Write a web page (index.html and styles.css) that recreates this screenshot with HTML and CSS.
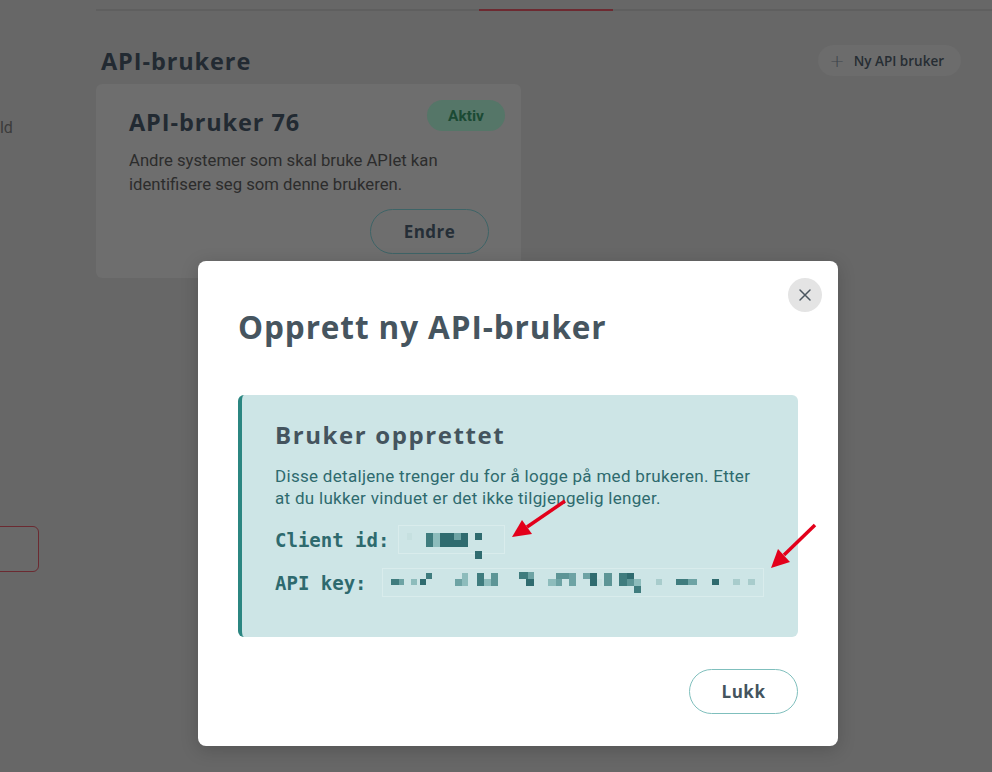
FILE: index.html
```html
<!DOCTYPE html>
<html lang="no">
<head>
<meta charset="utf-8">
<title>API-brukere</title>
<link rel="stylesheet" href="styles.css">
</head>
<body>
<div class="layout">
  <aside class="sidebar">
    <div class="side-link">Innhold</div>
    <div class="side-box"></div>
  </aside>
  <main class="main">
    <div class="tabs">
      <div class="tab"></div>
      <div class="tab tab-active"></div>
    </div>
    <div class="header">
      <h1 class="page-title">API-brukere</h1>
      <button class="new-btn"><span class="plus">+</span>Ny API bruker</button>
    </div>
    <div class="card">
      <div class="card-top">
        <h2 class="card-title">API-bruker 76</h2>
        <span class="badge">Aktiv</span>
      </div>
      <p class="card-text">Andre systemer som skal bruke APIet kan identifisere seg som denne brukeren.</p>
      <div class="card-actions">
        <button class="btn-outline dark">Endre</button>
      </div>
    </div>
  </main>
</div>

<div class="modal">
  <button class="modal-close" aria-label="Lukk">
    <svg width="14" height="14" viewBox="0 0 14 14"><path d="M2 2 L12 12 M12 2 L2 12" stroke="#4a5660" stroke-width="1.5" fill="none" stroke-linecap="round"/></svg>
  </button>
  <h2 class="modal-title">Opprett ny API-bruker</h2>
  <div class="info">
    <h3 class="info-title">Bruker opprettet</h3>
    <p class="info-text">Disse detaljene trenger du for å logge på med brukeren. Etter at du lukker vinduet er det ikke tilgjengelig lenger.</p>
    <div class="cred"><span class="cred-label">Client id:</span><span class="secret secret-id"><svg width="107" height="28" viewBox="0 0 107 28">
        <rect x="8" y="7" width="5" height="7" fill="#c6e0e0"/>
        <rect x="27" y="7" width="7" height="14" fill="#3f7c7e"/>
        <rect x="34" y="7" width="7" height="14" fill="#8dbcbc"/>
        <rect x="41" y="7" width="14" height="14" fill="#2f6b6f"/>
        <rect x="55" y="7" width="7" height="7" fill="#6da3a4"/>
        <rect x="55" y="14" width="7" height="7" fill="#2f6b6f"/>
        <rect x="62" y="7" width="7" height="14" fill="#2f6b6f"/>
        <rect x="76" y="7" width="7" height="7" fill="#2f6b6f"/>
        <rect x="76" y="25" width="7" height="8" fill="#2f6b6f"/>
      </svg></span></div>
    <div class="cred"><span class="cred-label">API key:</span><span class="secret secret-key"><svg width="382" height="28" viewBox="0 0 382 28">
        <g transform="translate(0,1)">
        <rect x="8" y="9" width="8" height="6" fill="#3f7c7e"/>
        <rect x="16" y="9" width="5" height="6" fill="#6da3a4"/>
        <rect x="28" y="9" width="6" height="6" fill="#8dbcbc"/>
        <rect x="37" y="9" width="6" height="6" fill="#2f6b6f"/>
        <rect x="43" y="3" width="6" height="6" fill="#3f7c7e"/>
        <rect x="72" y="9" width="7" height="7" fill="#6da3a4"/>
        <rect x="79" y="3" width="6" height="13" fill="#8dbcbc"/>
        <rect x="94" y="3" width="7" height="13" fill="#3f7c7e"/>
        <rect x="101" y="9" width="7" height="7" fill="#8dbcbc"/>
        <rect x="108" y="3" width="7" height="13" fill="#5d9596"/>
        <rect x="136" y="2" width="9" height="7" fill="#3f7c7e"/>
        <rect x="145" y="2" width="6" height="7" fill="#6da3a4"/>
        <rect x="143" y="9" width="8" height="7" fill="#2f6b6f"/>
        <rect x="165" y="9" width="8" height="7" fill="#8dbcbc"/>
        <rect x="173" y="3" width="13" height="6" fill="#5d9596"/>
        <rect x="173" y="9" width="6" height="7" fill="#6da3a4"/>
        <rect x="186" y="3" width="7" height="13" fill="#6da3a4"/>
        <rect x="200" y="3" width="7" height="6" fill="#6da3a4"/>
        <rect x="207" y="3" width="7" height="13" fill="#2f6b6f"/>
        <rect x="214" y="9" width="5" height="7" fill="#c6e0e0"/>
        <rect x="221" y="3" width="8" height="13" fill="#5d9596"/>
        <rect x="236" y="3" width="8" height="13" fill="#3f7c7e"/>
        <rect x="244" y="3" width="7" height="6" fill="#2f6b6f"/>
        <rect x="244" y="9" width="7" height="7" fill="#5d9596"/>
        <rect x="251" y="9" width="7" height="7" fill="#8dbcbc"/>
        <rect x="251" y="16" width="7" height="7" fill="#3f7c7e"/>
        <rect x="273" y="9" width="6" height="6" fill="#a8cccc"/>
        <rect x="293" y="9" width="12" height="6" fill="#3f7c7e"/>
        <rect x="305" y="9" width="9" height="6" fill="#6da3a4"/>
        <rect x="329" y="9" width="7" height="6" fill="#2f6b6f"/>
        <rect x="350" y="9" width="7" height="6" fill="#a8cccc"/>
        <rect x="365" y="9" width="7" height="6" fill="#a8cccc"/>
        </g>
      </svg></span></div>
  </div>
  <div class="modal-actions">
    <button class="btn-outline teal">Lukk</button>
  </div>
</div>

<svg class="annotations" width="992" height="772" viewBox="0 0 992 772">
  <line x1="565" y1="501" x2="527" y2="527" stroke="#e3001b" stroke-width="3.5"/>
  <polygon points="512,537 532,534 522,520" fill="#e3001b"/>
  <line x1="815" y1="525" x2="784" y2="555" stroke="#e3001b" stroke-width="3.5"/>
  <polygon points="771,568 790,562 778,549" fill="#e3001b"/>
</svg>
</body>
</html>
```

FILE: styles.css
```css
* { box-sizing: border-box; }
html, body { margin: 0; padding: 0; }
body {
  width: 992px;
  height: 772px;
  overflow: hidden;
  background: #676767;
  font-family: Roboto, "Liberation Sans", sans-serif;
  position: relative;
}
button { font: inherit; cursor: pointer; }
h1, h2, h3, p { margin: 0; }

.layout { display: flex; height: 772px; }

.sidebar { width: 96px; flex: none; overflow: hidden; }
.side-link {
  margin: 116px 0 0 -40px;
  font-size: 16px;
  line-height: 24px;
  color: #3b3b3b;
  white-space: nowrap;
}
.side-box {
  margin: 386px 0 0 -40px;
  width: 79px;
  height: 46px;
  border: 1px solid #6b2a31;
  border-radius: 6px;
  background: #696969;
}

.main { flex: 1; min-width: 0; }

.tabs {
  height: 11px;
  display: flex;
  border-bottom: 2px solid #5f5f5f;
  padding-left: 383px;
}
.tab { width: 0; }
.tab-active {
  width: 134px;
  height: 11px;
  border-bottom: 2px solid #6d2a31;
  margin-bottom: -2px;
}

.header {
  margin-top: 34px;
  height: 31px;
  display: flex;
  justify-content: space-between;
  align-items: center;
  padding: 0 31px 0 5px;
  width: 896px;
}
.page-title {
  font-family: "Open Sans", sans-serif;
  font-weight: 700;
  font-size: 23.5px;
  color: #222a32;
  letter-spacing: 0.9px;
}
.new-btn {
  height: 31px;
  padding: 0 17px 0 12px;
  border: none;
  border-radius: 16px;
  background: #6c6c6c;
  color: #262d33;
  font-family: "Open Sans", sans-serif;
  font-weight: 600;
  font-size: 13.5px;
  display: flex;
  align-items: center;
}
.plus {
  font-family: "DejaVu Sans", sans-serif;
  font-weight: 300;
  font-size: 18px;
  color: #3d444b;
  margin-right: 9px;
  line-height: 1;
}

.card {
  margin-top: 8px;
  width: 425px;
  height: 194px;
  background: #6e6e6e;
  border-radius: 6px;
  padding: 16px 32px 24px 33px;
  display: flex;
  flex-direction: column;
}
.card-top {
  display: flex;
  justify-content: space-between;
  align-items: flex-start;
  margin-right: -16px;
}
.card-title {
  margin-top: 7px;
  font-family: "Open Sans", sans-serif;
  font-weight: 700;
  font-size: 23.5px;
  line-height: 30px;
  color: #222a32;
  letter-spacing: 0.9px;
}
.badge {
  height: 31px;
  width: 78px;
  border-radius: 16px;
  background: #557668;
  color: #1b4a34;
  font-weight: 700;
  font-size: 15.5px;
  display: flex;
  align-items: center;
  justify-content: center;
}
.card-text {
  margin-top: 12px;
  font-size: 16.7px;
  line-height: 24px;
  color: #2c2c2c;
}
.card-actions {
  margin-top: auto;
  display: flex;
  justify-content: flex-end;
}
.btn-outline {
  height: 45px;
  border-radius: 23px;
  background: transparent;
  font-family: "Open Sans", sans-serif;
  font-weight: 700;
  font-size: 17px;
  letter-spacing: 0.5px;
}
.btn-outline.dark {
  width: 119px;
  border: 1px solid #3e6467;
  color: #252e37;
}
.btn-outline.teal {
  width: 109px;
  border: 1px solid #7fbfbd;
  color: #44545e;
}

.modal {
  position: absolute;
  left: 198px;
  top: 261px;
  width: 640px;
  background: #ffffff;
  border-radius: 8px;
  padding: 46px 40px 32px;
  box-shadow: 0 4px 18px rgba(0, 0, 0, 0.18);
}
.modal-close {
  position: absolute;
  top: 17px;
  right: 16px;
  width: 34px;
  height: 34px;
  border-radius: 50%;
  border: none;
  background: #e4e4e4;
  display: flex;
  align-items: center;
  justify-content: center;
  padding: 0;
}
.modal-title {
  font-family: "Open Sans", sans-serif;
  font-weight: 700;
  font-size: 31.5px;
  line-height: 40px;
  color: #46555f;
  letter-spacing: 0.9px;
}
.info {
  margin-top: 48px;
  background: #cde5e6;
  border-left: 4px solid #2b8681;
  border-radius: 6px;
  padding: 25px 40px 40px 33px;
}
.info-title {
  font-family: "Open Sans", sans-serif;
  font-weight: 700;
  font-size: 24px;
  line-height: 30px;
  color: #44545e;
  letter-spacing: 1.6px;
}
.info-text {
  margin-top: 15px;
  font-size: 17px;
  line-height: 22px;
  letter-spacing: 0.3px;
  color: #2e6a6e;
}
.cred {
  font-family: "DejaVu Sans Mono", monospace;
  font-weight: 700;
  font-size: 19px;
  color: #2e6a6e;
  display: flex;
  align-items: center;
  height: 29px;
  white-space: nowrap;
}
.cred-label { flex: none; }
.cred:first-of-type { margin-top: 16px; }
.cred + .cred { margin-top: 14px; }
.secret {
  display: block;
  flex: none;
  height: 29px;
  border: 1px solid #d9ecec;
}
.secret svg { display: block; overflow: visible; }
.secret-id { width: 107px; margin-left: 9px; }
.secret-key { width: 382px; margin-left: 15px; }

.modal-actions {
  margin-top: 32px;
  display: flex;
  justify-content: flex-end;
}

.annotations {
  position: absolute;
  left: 0;
  top: 0;
  pointer-events: none;
}
```
